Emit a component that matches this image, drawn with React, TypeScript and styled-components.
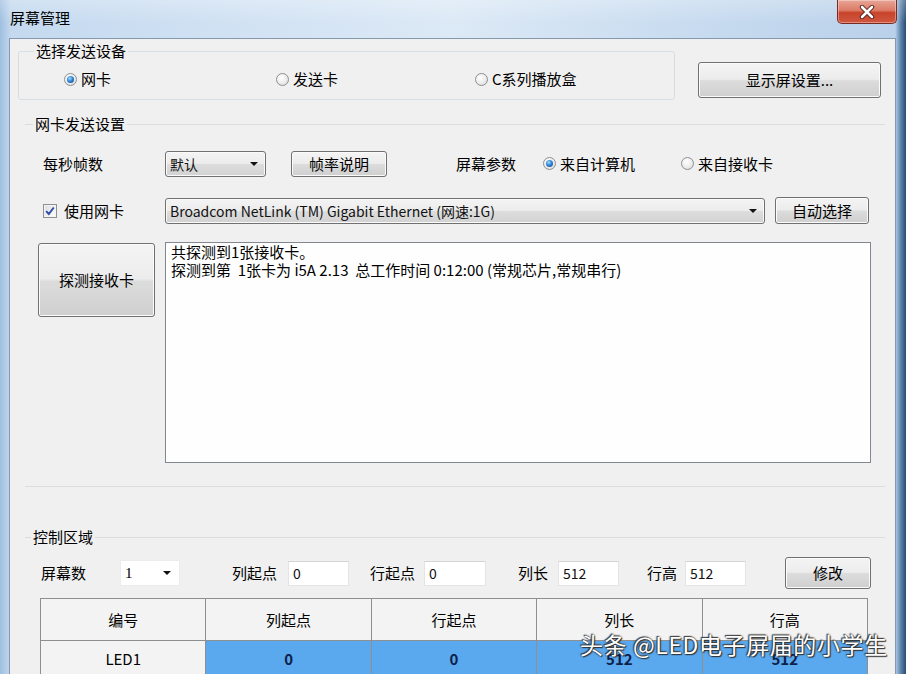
import React from "react";
import styled, { createGlobalStyle } from "styled-components";

const FONT = `"Noto Sans CJK SC", "Noto Sans", "Liberation Sans", sans-serif`;

const Global = createGlobalStyle`
  html, body { margin: 0; padding: 0; width: 906px; height: 674px; overflow: hidden; }
  body { font-family: ${FONT}; }
  #root { width: 906px; height: 674px; }
  * { box-sizing: border-box; }
`;

const Window = styled.div`
  position: relative;
  width: 906px;
  height: 674px;
  overflow: hidden;
  display: flex;
  flex-direction: column;
  background: linear-gradient(90deg, #9fbfe0 0%, #c4d9ef 1.2%, #d3e3f4 30%, #dce9f6 50%, #c9dcf0 75%, #bad1ea 98.8%, #5e86b0 99.4%, #2c4a6d 100%);
  font-family: ${FONT};
  color: #111;
`;

const TitleBar = styled.div`
  flex: none;
  height: 38px;
  display: flex;
  align-items: flex-start;
  justify-content: space-between;
  padding: 0 9px 0 10px;
  background: linear-gradient(180deg, rgba(255, 255, 255, 0.25) 0%, rgba(255, 255, 255, 0) 60%);
`;

const Title = styled.div`
  margin-top: 8px;
  font-size: 15px;
  line-height: 20px;
  color: #000;
`;

const CloseButton = styled.div`
  width: 60px;
  height: 24px;
  border: 1px solid #7a2a1e;
  border-top: none;
  border-radius: 0 0 5px 5px;
  background: linear-gradient(180deg, #e9a597 0%, #dc7b67 45%, #c8432c 55%, #d0583f 100%);
  box-shadow: inset 0 0 0 1px rgba(255, 255, 255, 0.35);
  display: flex;
  align-items: center;
  justify-content: center;
`;

const Client = styled.div`
  flex: 1;
  margin: 0 10px 0 9px;
  background: #f0f0f0;
  border: 1px solid #8498ae;
  border-bottom: none;
  padding: 2px 10px 0 8px;
  display: flex;
  flex-direction: column;
`;

const TopRow = styled.div`
  display: flex;
  align-items: flex-start;
`;

const DeviceGroup = styled.fieldset`
  width: 657px;
  margin: 0;
  padding: 0 0 10px 0;
  border: 1px solid #d6dee4;
  border-radius: 3px;
  min-inline-size: 0;
`;

const Legend = styled.legend<{ $offset: number }>`
  margin-left: ${(p) => p.$offset}px;
  padding: 0 2px;
  font-size: 15px;
  line-height: 20px;
  color: #000;
`;

const LineGroup = styled.fieldset<{ $top: number; $bottomLine?: boolean }>`
  margin: ${(p) => p.$top}px 0 0 7px;
  padding: 0 0 ${(p) => (p.$bottomLine ? 23 : 0)}px 0;
  border: none;
  border-top: 1px solid #dcdcdc;
  border-bottom: ${(p) => (p.$bottomLine ? "1px solid #dcdcdc" : "none")};
  min-inline-size: 0;
`;

const RadioRow = styled.div`
  display: flex;
  align-items: center;
  margin-top: 8px;
  height: 20px;
  padding-left: 45px;
`;

const RadioItem = styled.label<{ $width?: number }>`
  display: inline-flex;
  align-items: center;
  gap: 4px;
  flex: none;
  width: ${(p) => (p.$width ? `${p.$width}px` : "auto")};
  font-size: 15px;
  line-height: 20px;
  color: #000;
`;

const RadioCircle = styled.span<{ $checked?: boolean }>`
  flex: none;
  width: 13px;
  height: 13px;
  border-radius: 50%;
  border: 1px solid #8d8f91;
  background: radial-gradient(circle at 40% 35%, #ffffff 0%, #ececec 55%, #d0d0d0 100%);
  display: inline-flex;
  align-items: center;
  justify-content: center;
  &::after {
    content: "";
    width: 7px;
    height: 7px;
    border-radius: 50%;
    background: radial-gradient(circle at 40% 35%, #a8dcff 0%, #2f86d6 45%, #0c3e80 100%);
    display: ${(p) => (p.$checked ? "block" : "none")};
  }
`;

const WinButton = styled.div<{ $w: number; $h: number; $ml?: number; $mt?: number }>`
  flex: none;
  width: ${(p) => p.$w}px;
  height: ${(p) => p.$h}px;
  margin-left: ${(p) => p.$ml ?? 0}px;
  margin-top: ${(p) => p.$mt ?? 0}px;
  border: 1px solid #707070;
  border-radius: 3px;
  background: linear-gradient(180deg, #f4f4f4 0%, #ececec 48%, #dcdcdc 52%, #cfcfcf 100%);
  box-shadow: inset 0 0 0 1px #fbfbfb;
  display: flex;
  align-items: center;
  justify-content: center;
  font-size: 15px;
  line-height: 20px;
  color: #000;
`;

const FormRow = styled.div<{ $mt: number; $h: number; $pl: number }>`
  display: flex;
  align-items: center;
  margin-top: ${(p) => p.$mt}px;
  height: ${(p) => p.$h}px;
  padding-left: ${(p) => p.$pl}px;
`;

const FieldLabel = styled.span<{ $w?: number; $ml?: number }>`
  flex: none;
  width: ${(p) => (p.$w ? `${p.$w}px` : "auto")};
  margin-left: ${(p) => p.$ml ?? 0}px;
  font-size: 15px;
  line-height: 20px;
  color: #000;
  white-space: nowrap;
`;

const Combo = styled.div<{ $w: number }>`
  flex: none;
  width: ${(p) => p.$w}px;
  height: 26px;
  border: 1px solid #707070;
  border-radius: 3px;
  background: linear-gradient(180deg, #f4f4f4 0%, #ececec 48%, #dddddd 52%, #d2d2d2 100%);
  box-shadow: inset 0 0 0 1px #fafafa;
  display: flex;
  align-items: center;
  justify-content: space-between;
  padding: 0 7px 0 4px;
  font-size: 14px;
  line-height: 20px;
  color: #111;
  white-space: nowrap;
`;

const Arrow = styled.span`
  flex: none;
  width: 0;
  height: 0;
  border-left: 4px solid transparent;
  border-right: 4px solid transparent;
  border-top: 4px solid #111;
`;

const CheckItem = styled.label`
  flex: none;
  width: 122px;
  display: inline-flex;
  align-items: center;
  gap: 7px;
  font-size: 15px;
  line-height: 20px;
  color: #000;
`;

const CheckBox = styled.span`
  flex: none;
  width: 14px;
  height: 14px;
  border: 1px solid #8d8f91;
  background: linear-gradient(135deg, #dcdcdc 0%, #ffffff 100%);
  box-shadow: inset 0 0 0 1px #f4f4f4;
  display: inline-flex;
  align-items: center;
  justify-content: center;
`;

const DetectRow = styled.div`
  display: flex;
  align-items: flex-start;
  margin-top: 18px;
  padding-left: 13px;
`;

const LogBox = styled.div`
  flex: none;
  width: 706px;
  height: 221px;
  margin-left: 10px;
  border: 1px solid #838790;
  background: #fefefe;
  padding: 0 5px;
  font-size: 15px;
  line-height: 18px;
  color: #000;
  white-space: pre;
`;

const WhiteCombo = styled.div<{ $w: number }>`
  flex: none;
  width: ${(p) => p.$w}px;
  height: 26px;
  background: #ffffff;
  border: 1px solid #ececec;
  display: flex;
  align-items: center;
  justify-content: space-between;
  padding: 0 8px 0 4px;
  font-family: "Liberation Serif", serif;
  font-size: 15px;
  color: #000;
`;

const TextInput = styled.div<{ $w: number }>`
  flex: none;
  width: ${(p) => p.$w}px;
  height: 25px;
  background: #ffffff;
  border: 1px solid #e4e4e4;
  border-top-color: #d4d4d4;
  padding: 0 4px;
  display: flex;
  align-items: center;
  font-size: 14px;
  color: #111;
`;

const Table = styled.table`
  margin: 9px 0 0 15px;
  width: 828px;
  border-collapse: collapse;
  table-layout: fixed;
  border: 1px solid #7e7e7e;
`;

const HeadCell = styled.th`
  height: 42px;
  border: 1px solid #8f8f8f;
  background: #f3f3f3;
  font-weight: normal;
  font-size: 15px;
  color: #000;
  text-align: center;
`;

const DataCell = styled.td<{ $selected?: boolean }>`
  height: 36px;
  border: 1px solid #8f8f8f;
  background: ${(p) => (p.$selected ? "#5aa8ee" : "#f3f3f3")};
  font-size: 15px;
  font-weight: ${(p) => (p.$selected ? 700 : 400)};
  color: ${(p) => (p.$selected ? "#0e1f4a" : "#000")};
  text-align: center;
`;

const Watermark = styled.div`
  position: absolute;
  left: 580px;
  top: 629px;
  font-size: 23px;
  letter-spacing: 0.6px;
  line-height: 30px;
  color: #ffffff;
  white-space: nowrap;
  text-shadow: 0 0 2px #222, 1px 1px 1px #333, -1px -1px 1px #444;
`;

function Radio({ label, checked, width }: { label: string; checked?: boolean; width?: number }) {
  return (
    <RadioItem $width={width}>
      <RadioCircle $checked={checked} />
      {label}
    </RadioItem>
  );
}

function Field({ label, value, ml, lw, iw }: { label: string; value: string; ml: number; lw: number; iw: number }) {
  return (
    <>
      <FieldLabel $w={lw} $ml={ml}>
        {label}
      </FieldLabel>
      <TextInput $w={iw}>{value}</TextInput>
    </>
  );
}

export default function App() {
  const headers = ["编号", "列起点", "行起点", "列长", "行高"];
  return (
    <>
      <Global />
      <Window>
        <TitleBar>
          <Title>屏幕管理</Title>
          <CloseButton>
            <svg width="16" height="14" viewBox="0 0 16 14">
              <path d="M3 2 L13 12 M13 2 L3 12" stroke="#4a1a12" strokeWidth="4.4" strokeLinecap="round" />
              <path d="M3 2 L13 12 M13 2 L3 12" stroke="#ffffff" strokeWidth="2.6" strokeLinecap="round" />
            </svg>
          </CloseButton>
        </TitleBar>
        <Client>
          <TopRow>
            <DeviceGroup>
              <Legend $offset={15}>选择发送设备</Legend>
              <RadioRow>
                <Radio label="网卡" checked width={212} />
                <Radio label="发送卡" width={199} />
                <Radio label="C系列播放盒" />
              </RadioRow>
            </DeviceGroup>
            <WinButton $w={183} $h={36} $ml={23} $mt={21}>
              显示屏设置...
            </WinButton>
          </TopRow>

          <LineGroup $top={14} $bottomLine>
            <Legend $offset={8}>网卡发送设置</Legend>
            <FormRow $mt={16} $h={27} $pl={18}>
              <FieldLabel $w={122}>每秒帧数</FieldLabel>
              <Combo $w={101}>
                <span>默认</span>
                <Arrow />
              </Combo>
              <WinButton $w={96} $h={26} $ml={25}>
                帧率说明
              </WinButton>
              <FieldLabel $w={87} $ml={69}>
                屏幕参数
              </FieldLabel>
              <Radio label="来自计算机" checked width={138} />
              <Radio label="来自接收卡" />
            </FormRow>
            <FormRow $mt={20} $h={27} $pl={18}>
              <CheckItem>
                <CheckBox>
                  <svg width="10" height="10" viewBox="0 0 10 10">
                    <path d="M1.2 5.2 L3.8 8 L8.8 1.5" fill="none" stroke="#2b4aa8" strokeWidth="1.9" />
                  </svg>
                </CheckBox>
                使用网卡
              </CheckItem>
              <Combo $w={600}>
                <span>Broadcom NetLink (TM) Gigabit Ethernet (网速:1G)</span>
                <Arrow />
              </Combo>
              <WinButton $w={94} $h={27} $ml={10}>
                自动选择
              </WinButton>
            </FormRow>
            <DetectRow>
              <WinButton $w={117} $h={74} $mt={1}>
                探测接收卡
              </WinButton>
              <LogBox>
                {"共探测到1张接收卡。\n探测到第  1张卡为 i5A 2.13  总工作时间 0:12:00 (常规芯片,常规串行)"}
              </LogBox>
            </DetectRow>
          </LineGroup>

          <LineGroup $top={40}>
            <Legend $offset={6}>控制区域</Legend>
            <FormRow $mt={10} $h={32} $pl={16}>
              <FieldLabel $w={79}>屏幕数</FieldLabel>
              <WhiteCombo $w={60}>
                <span>1</span>
                <Arrow />
              </WhiteCombo>
              <Field label="列起点" value="0" ml={52} lw={56} iw={61} />
              <Field label="行起点" value="0" ml={21} lw={54} iw={62} />
              <Field label="列长" value="512" ml={32} lw={40} iw={61} />
              <Field label="行高" value="512" ml={28} lw={38} iw={61} />
              <WinButton $w={86} $h={32} $ml={39}>
                修改
              </WinButton>
            </FormRow>
            <Table>
              <thead>
                <tr>
                  {headers.map((h) => (
                    <HeadCell key={h}>{h}</HeadCell>
                  ))}
                </tr>
              </thead>
              <tbody>
                <tr>
                  <DataCell>LED1</DataCell>
                  <DataCell $selected>0</DataCell>
                  <DataCell $selected>0</DataCell>
                  <DataCell $selected>512</DataCell>
                  <DataCell $selected>512</DataCell>
                </tr>
              </tbody>
            </Table>
          </LineGroup>
        </Client>
        <Watermark>头条 @LED电子屏届的小学生</Watermark>
      </Window>
    </>
  );
}
